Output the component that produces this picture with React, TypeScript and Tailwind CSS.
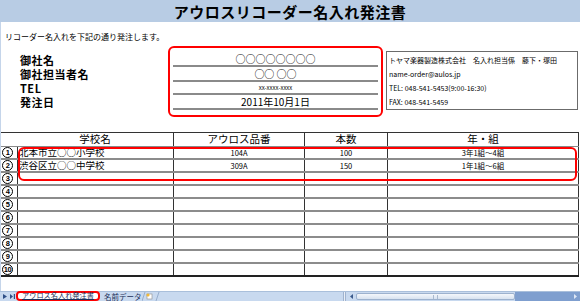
import React from "react";

const ROWS = [
  { no: "1", school: "北本市立○○小学校", part: "104A", qty: "100", grade: "3年1組～4組" },
  { no: "2", school: "渋谷区立○○中学校", part: "309A", qty: "150", grade: "1年1組～6組" },
  { no: "3" },
  { no: "4" },
  { no: "5" },
  { no: "6" },
  { no: "7" },
  { no: "8" },
  { no: "9" },
  { no: "10" },
];

const INFO = [
  { label: "御社名", value: "○○○○○○○○", h: "h-[14px]", small: false },
  { label: "御社担当者名", value: "○○ ○○", h: "h-[15px]", small: false },
  { label: "TEL", value: "xx-xxxx-xxxx", h: "h-[13px]", small: true },
  { label: "発注日", value: "2011年10月1日", h: "h-[15px]", small: false },
];

const CONTACT = [
  "トヤマ楽器製造株式会社　名入れ担当係　藤下・塚田",
  "name-order@aulos.jp",
  "TEL: 048-541-5453(9:00-16:30)",
  "FAX: 048-541-5459",
];

export default function App() {
  return (
    <div className="w-[580px] h-[301px] bg-white overflow-hidden flex flex-col text-black font-['Noto_Sans_CJK_JP','Noto_Sans',sans-serif]">
      {/* title band */}
      <div className="h-[22px] shrink-0 bg-[#b8cce4] flex items-center justify-center text-[15px] leading-none font-bold tracking-[0.5px]">
        アウロスリコーダー名入れ発注書
      </div>

      <div className="flex-1 flex flex-col border-l border-[#c5d5ea]">
        <p className="mt-[10px] ml-[4px] text-[8px] leading-[10px]">リコーダー名入れを下記の通り発注します。</p>

        {/* customer info */}
        <div className="mt-[4px] flex items-start">
          <div className="w-[167px] pl-[19px] pt-[7px] flex flex-col">
            {INFO.map((r) => (
              <div key={r.label} className={`${r.h} flex items-center text-[11px] tracking-[0.5px] font-bold leading-none`}>
                {r.label}
              </div>
            ))}
          </div>
          <div className="w-[215px] h-[71px] border-2 border-[#ff0000] rounded-[6px] px-[3px] pt-[5px]">
            {INFO.map((r) => (
              <div
                key={r.label}
                className={`${r.h} border-b-2 border-[#8a8a8a] flex items-center justify-center leading-none ${r.small ? "text-[6px]" : "text-[10px]"}`}
              >
                {r.value}
              </div>
            ))}
          </div>
          <div className="ml-[3px] mt-[5px] w-[192px] h-[59px] border border-[#6b6b6b] pl-[2px] pt-[1px]">
            {CONTACT.map((t) => (
              <div key={t} className="h-[14px] flex items-center text-[7px] leading-none whitespace-nowrap">
                {t}
              </div>
            ))}
          </div>
        </div>

        {/* order table */}
        <div className="relative mt-[15px] w-[578px]">
          <div className="h-[15px] flex border-t border-[#333] border-b border-b-[#8a8a8a] text-[10.5px] leading-none">
            <div className="w-[172px] flex items-center justify-center pl-[16px]">学校名</div>
            <div className="w-[131px] border-l border-[#333] flex items-center justify-center">アウロス品番</div>
            <div className="w-[83px] border-l border-[#333] flex items-center justify-center">本数</div>
            <div className="flex-1 border-l border-r border-[#333] flex items-center justify-center">年・組</div>
          </div>
          {ROWS.map((r, i) => (
            <div
              key={r.no}
              className={`h-[13px] flex border-b-2 ${i === ROWS.length - 1 ? "border-[#222]" : "border-[#8c8c8c]"}`}
            >
              <div className="w-[16px] flex items-center pl-[1px]">
                <span className="w-[11px] h-[11px] rounded-full border-[1.5px] border-black flex items-center justify-center font-['Liberation_Sans',sans-serif] font-bold leading-none tracking-[-0.5px] text-[7.5px]">
                  {r.no}
                </span>
              </div>
              <div className="w-[156px] border-l border-[#333] flex items-center pl-[1px] text-[9.5px] leading-none whitespace-nowrap">
                {r.school}
              </div>
              <div className="w-[131px] border-l border-[#333] flex items-center justify-center text-[7.5px] leading-none">
                {r.part}
              </div>
              <div className="w-[83px] border-l border-[#333] flex items-center justify-center text-[7.5px] leading-none">
                {r.qty}
              </div>
              <div className="flex-1 border-l border-r border-[#333] flex items-center justify-center text-[7.5px] leading-none">
                {r.grade}
              </div>
            </div>
          ))}
          <div className="absolute top-[15px] left-[17px] w-[559px] h-[34px] border-2 border-[#ff0000] rounded-[6px]" />
        </div>
      </div>

      {/* sheet tabs + scrollbar */}
      <div className="h-[10px] shrink-0 flex bg-[#c8d9ef] border-t border-[#a9bfdb]">
        <div className="w-[16px] flex items-center gap-[3px] pl-[3px] text-[#2f4f86]">
          <svg width="4" height="5" viewBox="0 0 4 5"><path d="M0 0L4 2.5L0 5Z" fill="currentColor" /></svg>
          <svg width="5" height="5" viewBox="0 0 5 5"><path d="M0 0L3 2.5L0 5Z M3.8 0H5V5H3.8Z" fill="currentColor" /></svg>
        </div>
        <div className="w-[84px] -mt-[1px] bg-white border-2 border-[#ff0000] rounded-[4px] flex items-center justify-center text-[7.2px] leading-none text-[#1b2f5a] underline whitespace-nowrap">
          アウロス名入れ発注書
        </div>
        <div className="w-[42px] flex items-center pl-[4px] text-[7.5px] leading-none text-[#1b2f5a] whitespace-nowrap">
          名前データ
        </div>
        <div className="w-[20px] flex items-center">
          <svg width="18" height="9" viewBox="0 0 18 9">
            <path d="M0 9L3 0" stroke="#8aa2c4" strokeWidth="0.8" />
            <rect x="5" y="2" width="5" height="5" fill="#fff" stroke="#8a8a8a" strokeWidth="0.6" />
            <circle cx="6" cy="3" r="1.6" fill="#f0b93a" />
            <path d="M14 9L17 0" stroke="#8aa2c4" strokeWidth="0.8" />
          </svg>
        </div>
        <div className="w-[181px]" />
        <div className="w-[3px] bg-[#e9eef6] border-x border-[#9fb3cf]" />
        <div className="w-[10px] flex items-center justify-center text-[#3b5a8c]">
          <svg width="3" height="5" viewBox="0 0 3 5"><path d="M3 0L0 2.5L3 5Z" fill="currentColor" /></svg>
        </div>
        <div className="w-[159px] my-[1px] rounded-[2px] border border-[#9db2ce] bg-gradient-to-b from-[#f4f7fb] to-[#d7e2f0] flex items-center justify-center">
          <div className="w-[5px] h-[4px] border-x border-[#a9b9cf]" />
        </div>
        <div className="flex-1 bg-[#7f9fcf] flex items-center justify-end pr-[3px] text-[#dfe8f5]">
          <svg width="3" height="5" viewBox="0 0 3 5"><path d="M0 0L3 2.5L0 5Z" fill="currentColor" /></svg>
        </div>
      </div>
    </div>
  );
}
